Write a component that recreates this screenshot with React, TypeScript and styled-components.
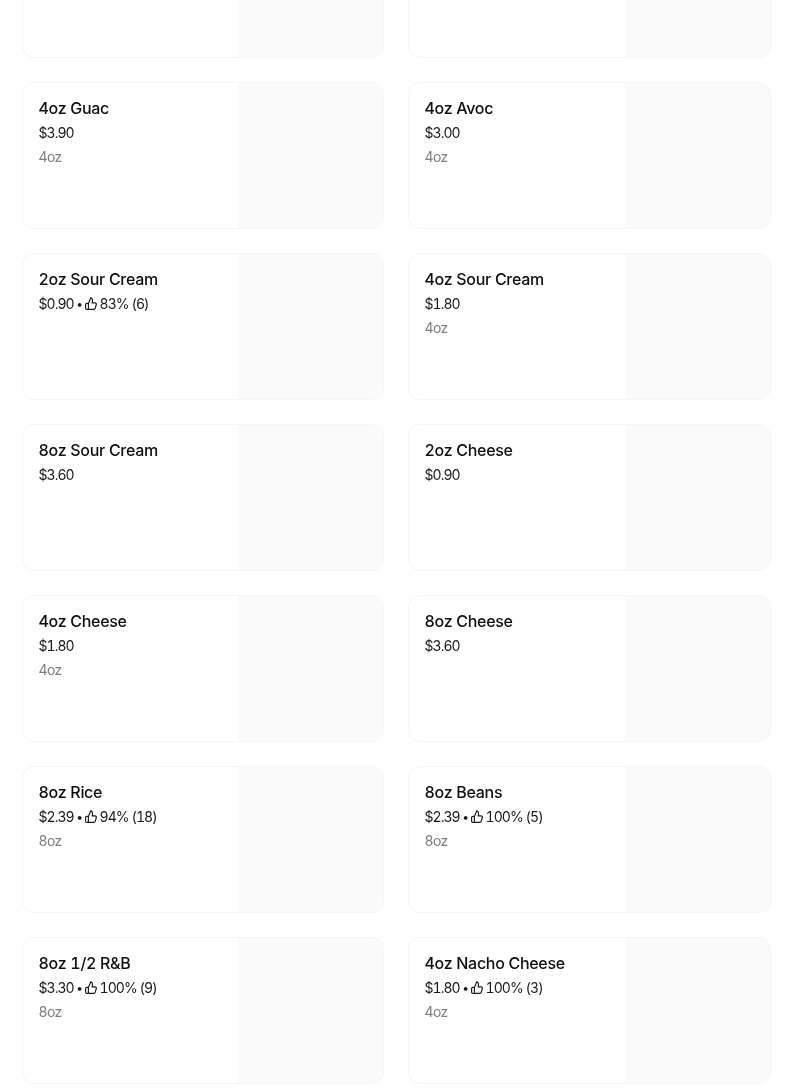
import React from "react";
import styled, { createGlobalStyle } from "styled-components";

const Global = createGlobalStyle`
  html, body { margin: 0; padding: 0; background: #fff; height: 1091px; overflow: hidden; }
`;

const Grid = styled.main`
  display: grid;
  grid-template-columns: 362px 363px;
  column-gap: 24px;
  row-gap: 24px;
  padding-left: 22px;
  margin-top: -89px;
  font-family: Inter, "Liberation Sans", sans-serif;
  font-variant-numeric: tabular-nums;
`;

const Card = styled.article`
  display: flex;
  height: 147px;
  box-sizing: border-box;
  border: 1px solid #f5f5f5;
  border-radius: 12px;
  overflow: hidden;
  background: #fff;
`;

const Info = styled.div`
  flex: 1;
  min-width: 0;
  padding: 15px 16px 0 15.5px;
  will-change: transform;
`;

const Title = styled.h3`
  margin: 0;
  font-size: 16px;
  line-height: 20px;
  font-weight: 550;
  letter-spacing: -0.3px;
  color: #0f0f0f;
`;

const Meta = styled.div`
  display: flex;
  align-items: center;
  margin-top: 5px;
  height: 20px;
  font-size: 14px;
  line-height: 20px;
  letter-spacing: -0.95px;
  color: #1a1a1a;
`;

const Dot = styled.span`
  margin: 0 2.5px 0 2.5px;
  font-size: 12px;
`;

const Thumb = styled.svg`
  width: 12px;
  height: 13px;
  margin: -1px 3px 0 0;
  fill: none;
  stroke: #1a1a1a;
  stroke-width: 1.15;
`;

const Size = styled.div`
  margin-top: 4px;
  font-size: 14px;
  line-height: 20px;
  letter-spacing: -0.6px;
  color: #808080;
`;

const Photo = styled.div`
  flex: 0 0 145px;
  background: #fafafa;
`;

type Item = { title?: string; price?: string; rating?: string; size?: string };

const items: Item[] = [
  {},
  {},
  { title: "4oz Guac", price: "$3.90", size: "4oz" },
  { title: "4oz Avoc", price: "$3.00", size: "4oz" },
  { title: "2oz Sour Cream", price: "$0.90", rating: "83% (6)" },
  { title: "4oz Sour Cream", price: "$1.80", size: "4oz" },
  { title: "8oz Sour Cream", price: "$3.60" },
  { title: "2oz Cheese", price: "$0.90" },
  { title: "4oz Cheese", price: "$1.80", size: "4oz" },
  { title: "8oz Cheese", price: "$3.60" },
  { title: "8oz Rice", price: "$2.39", rating: "94% (18)", size: "8oz" },
  { title: "8oz Beans", price: "$2.39", rating: "100% (5)", size: "8oz" },
  { title: "8oz 1/2 R&B", price: "$3.30", rating: "100% (9)", size: "8oz" },
  { title: "4oz Nacho Cheese", price: "$1.80", rating: "100% (3)", size: "4oz" },
];

const ThumbIcon = () => (
  <Thumb viewBox="0 0 12 13" preserveAspectRatio="none">
    <path d="M3.4 6.4H1.7C1 6.4.6 6.9.6 7.5v3.7c0 .7.5 1.2 1.2 1.2h6.9c.8 0 1.4-.5 1.6-1.2l1-3.7c.2-.9-.4-1.7-1.3-1.7H7.2l.3-2.4C7.6 2 6.9 1 5.8.7L3.4 6.4Zm0 0v6" />
  </Thumb>
);

export default function App() {
  return (
    <>
      <Global />
      <Grid>
        {items.map((it, i) => (
          <Card key={i}>
            <Info>
              {it.title && <Title>{it.title}</Title>}
              {it.price && (
                <Meta>
                  {it.price}
                  {it.rating && (
                    <>
                      <Dot>•</Dot>
                      <ThumbIcon />
                      {it.rating}
                    </>
                  )}
                </Meta>
              )}
              {it.size && <Size>{it.size}</Size>}
            </Info>
            <Photo />
          </Card>
        ))}
      </Grid>
    </>
  );
}
